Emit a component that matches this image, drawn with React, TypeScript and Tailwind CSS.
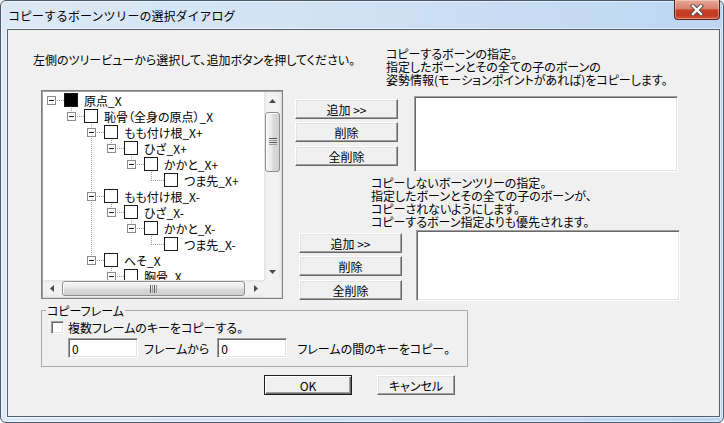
import React from "react";

interface TreeRow {
  text: string;
  level: number;
  kids: boolean;
  last: boolean;
  fill?: boolean;
}

const treeRows: TreeRow[] = [
  { text: "原点_X", level: 0, kids: true, last: true, fill: true },
  { text: "恥骨（全身の原点）_X", level: 1, kids: true, last: true },
  { text: "もも付け根_X+", level: 2, kids: true, last: false },
  { text: "ひざ_X+", level: 3, kids: true, last: true },
  { text: "かかと_X+", level: 4, kids: true, last: true },
  { text: "つま先_X+", level: 5, kids: false, last: true },
  { text: "もも付け根_X-", level: 2, kids: true, last: false },
  { text: "ひざ_X-", level: 3, kids: true, last: true },
  { text: "かかと_X-", level: 4, kids: true, last: true },
  { text: "つま先_X-", level: 5, kids: false, last: true },
  { text: "へそ_X", level: 2, kids: true, last: true },
  { text: "胸骨_X", level: 3, kids: true, last: false },
];

const raised =
  "flex items-center justify-center bg-[#f0f0f0] border border-t-white border-l-white border-b-[#696969] border-r-[#696969] shadow-[inset_-1px_-1px_0_#a0a0a0,inset_1px_1px_0_#e3e3e3]";
const sunken =
  "bg-white border border-t-[#a0a0a0] border-l-[#a0a0a0] border-b-white border-r-white shadow-[inset_1px_1px_0_#696969,inset_-1px_-1px_0_#e3e3e3]";

const dot = { stroke: "#a0a0a0", strokeDasharray: "1 1", shapeRendering: "crispEdges" as const };

function GuideCell({ on }: { on: boolean }) {
  return (
    <svg width="20" height="16" className="shrink-0">
      {on && <line x1="8.5" y1="0" x2="8.5" y2="16" {...dot} />}
    </svg>
  );
}

function ButtonCell({ row }: { row: TreeRow }) {
  return (
    <svg width="21" height="16" className="shrink-0">
      {row.level > 0 && <line x1="8.5" y1="0" x2="8.5" y2="8" {...dot} />}
      {!row.last && <line x1="8.5" y1="8" x2="8.5" y2="16" {...dot} />}
      <line x1="8" y1="8.5" x2="21" y2="8.5" {...dot} />
      {row.kids && (
        <>
          <rect x="4.5" y="4.5" width="8" height="8" fill="#fff" stroke="#8c8c8c" shapeRendering="crispEdges" />
          <line x1="6" y1="8.5" x2="11" y2="8.5" stroke="#222" shapeRendering="crispEdges" />
        </>
      )}
    </svg>
  );
}

function Grip({ vertical }: { vertical: boolean }) {
  return vertical ? (
    <svg width="8" height="8">
      {[0, 2, 4, 6].map((y) => (
        <line key={y} x1="0" y1={y + 0.5} x2="8" y2={y + 0.5} stroke={y % 4 === 0 ? "#5a5a5a" : "#9a9a9a"} shapeRendering="crispEdges" />
      ))}
    </svg>
  ) : (
    <svg width="8" height="8">
      {[0, 2, 4, 6].map((x) => (
        <line key={x} x1={x + 0.5} y1="0" x2={x + 0.5} y2="8" stroke={x % 4 === 0 ? "#5a5a5a" : "#9a9a9a"} shapeRendering="crispEdges" />
      ))}
    </svg>
  );
}

function Arrow({ dir }: { dir: "up" | "down" | "left" | "right" }) {
  const pts = {
    up: "0,4 3.5,0 7,4",
    down: "0,0 3.5,4 7,0",
    left: "4,0 0,3.5 4,7",
    right: "0,0 4,3.5 0,7",
  }[dir];
  const horiz = dir === "left" || dir === "right";
  return (
    <div className="w-[17px] h-[17px] flex items-center justify-center shrink-0">
      <svg width={horiz ? 4 : 7} height={horiz ? 7 : 4}>
        <polygon points={pts} fill="#4a4a4a" />
      </svg>
    </div>
  );
}

function TreeView() {
  const lastAt: boolean[] = [];
  const rows = treeRows.map((r) => {
    const guides = lastAt.slice(0, r.level).map((l) => !l);
    lastAt[r.level] = r.last;
    return { ...r, guides };
  });

  return (
    <div className="ml-[33px] mt-[24px] w-[242px] h-[209px] p-[1px] border border-[#7f7f7f] bg-white flex flex-col shadow-[inset_1px_1px_0_#a0a0a0,inset_-1px_-1px_0_#dcdcdc]">
      <div className="flex flex-1 min-h-0">
        <div className="flex-1 overflow-hidden flex flex-col">
          {rows.map((r, i) => (
            <div key={i} className="flex items-center h-[16px] shrink-0">
              {r.guides.map((g, k) => (
                <GuideCell key={k} on={g} />
              ))}
              <ButtonCell row={r} />
              <span className={`w-[14px] h-[14px] shrink-0 border border-[#1a1a1a] ${r.fill ? "bg-black" : "bg-white"}`} />
              <span className="ml-[6px] whitespace-nowrap">{r.text}</span>
            </div>
          ))}
        </div>
        <div className="w-[17px] flex flex-col bg-[linear-gradient(to_right,#e3e3e3,#f2f2f2_20%,#f2f2f2_80%,#e9e9e9)]">
          <Arrow dir="up" />
          <div className="mx-[1px] mt-[3px] h-[60px] rounded-[3px] border border-[#8e8e8e] bg-[linear-gradient(to_right,#f5f5f5,#e9e9e9_45%,#d9d9d9_55%,#d0d0d0)] shadow-[inset_1px_1px_0_#fff] flex items-center justify-center">
            <Grip vertical />
          </div>
          <div className="flex-1" />
          <Arrow dir="down" />
        </div>
      </div>
      <div className="flex h-[17px] shrink-0">
        <div className="flex-1 flex bg-[linear-gradient(to_bottom,#e3e3e3,#f2f2f2_20%,#f2f2f2_80%,#e9e9e9)]">
          <Arrow dir="left" />
          <div className="flex-1 mx-[2px] my-[1px] rounded-[3px] border border-[#8e8e8e] bg-[linear-gradient(to_bottom,#f5f5f5,#e9e9e9_45%,#d9d9d9_55%,#d0d0d0)] shadow-[inset_1px_1px_0_#fff] flex items-center justify-center">
            <Grip vertical={false} />
          </div>
          <Arrow dir="right" />
        </div>
        <div className="w-[17px] bg-[#f0f0f0]" />
      </div>
    </div>
  );
}

function ButtonStack({ first }: { first: string }) {
  return (
    <div className="flex flex-col">
      <button className={`${raised} w-[103px] h-[20px]`}>{first}</button>
      <button className={`${raised} w-[103px] h-[20px] mt-[3px]`}>削除</button>
      <button className={`${raised} w-[103px] h-[20px] mt-[4px]`}>全削除</button>
    </div>
  );
}

export default function App() {
  return (
    <div className="w-[724px] h-[423px] flex flex-col rounded-[6px] border border-[#4b5a6b] bg-[linear-gradient(to_right,#dde9f6,#cfe1f4_50%,#bcd6f1)] shadow-[inset_0_0_0_1px_rgba(255,255,255,0.55)] font-['Noto_Sans_CJK_JP',sans-serif] text-[12px] leading-[13px] text-black [font-feature-settings:'palt']">
      <div className="h-[28px] flex items-start justify-between shrink-0">
        <div className="pl-[7px] pt-[8px] [font-feature-settings:normal] whitespace-nowrap">
          コピーするボーンツリーの選択ダイアログ
        </div>
        <div className="-mt-[1px] mr-[3px] w-[46px] h-[20px] rounded-b-[4px] border border-t-0 border-[#5b1f16] bg-[linear-gradient(to_bottom,#e9a797,#d8826e_45%,#c6432c_52%,#c13a22_80%,#d85a3d)] shadow-[inset_0_0_0_1px_rgba(255,255,255,0.35)] flex items-center justify-center">
          <svg width="14" height="12" viewBox="0 0 14 12">
            <path d="M3 2 L11 10 M11 2 L3 10" stroke="#4a4a4a" strokeWidth="4.2" strokeLinecap="square" />
            <path d="M3 2 L11 10 M11 2 L3 10" stroke="#fff" strokeWidth="2.4" strokeLinecap="square" />
          </svg>
        </div>
      </div>

      <div className="ml-[6px] w-[713px] h-[388px] shrink-0 border border-[#56606c] bg-[#f0f0f0] flex flex-col shadow-[0_0_0_1px_rgba(255,255,255,0.5)]">
        <div className="flex h-[271px] shrink-0">
          <div className="w-[276px] shrink-0 flex flex-col">
            <p className="ml-[25px] mt-[23px] whitespace-nowrap">左側のツリービューから選択して、追加ボタンを押してください。</p>
            <TreeView />
          </div>

          <div className="flex flex-col">
            <div className="ml-[102px] mt-[17px] h-[39px] leading-[13px] whitespace-nowrap">
              <p>コピーするボーンの指定。</p>
              <p>指定したボーンとその全ての子のボーンの</p>
              <p>姿勢情報(モーションポイントがあれば)をコピーします。</p>
            </div>
            <div className="flex items-start mt-[10px]">
              <div className="ml-[11px] mt-[3px]">
                <ButtonStack first="追加 >>" />
              </div>
              <div className={`${sunken} ml-[16px] w-[264px] h-[76px]`} />
            </div>

            <div className="ml-[87px] mt-[4px] h-[52px] leading-[13px] whitespace-nowrap">
              <p>コピーしないボーンツリーの指定。</p>
              <p>指定したボーンとその全ての子のボーンが、</p>
              <p>コピーされないようにします。</p>
              <p>コピーするボーン指定よりも優先されます。</p>
            </div>
            <div className="flex items-start mt-[2px]">
              <div className="ml-[15px] mt-[3px]">
                <ButtonStack first="追加 >>" />
              </div>
              <div className={`${sunken} ml-[14px] w-[264px] h-[71px]`} />
            </div>
          </div>
        </div>

        <fieldset className="ml-[33px] mt-[3px] w-[427px] border border-[#a9a9a9] pb-[8px]">
          <legend className="ml-[4px] px-[1px] leading-[13px]">コピーフレーム</legend>
          <div className="flex items-center mt-[4px] h-[13px] pl-[9px]">
            <span className={`${sunken} w-[13px] h-[13px] shrink-0`} />
            <span className="ml-[4px] whitespace-nowrap">複数フレームのキーをコピーする。</span>
          </div>
          <div className="flex items-center mt-[4px] h-[20px] pl-[26px]">
            <div className={`${sunken} w-[70px] h-[20px] pl-[3px] flex items-center`}>0</div>
            <span className="ml-[6px] whitespace-nowrap">フレームから</span>
            <div className={`${sunken} ml-[8px] w-[70px] h-[20px] pl-[3px] flex items-center`}>0</div>
            <span className="ml-[10px] whitespace-nowrap">フレームの間のキーをコピー。</span>
          </div>
        </fieldset>

        <div className="flex mt-[8px] ml-[256px]">
          <button className="w-[88px] h-[20px] flex items-center justify-center bg-[#f0f0f0] border border-[#1e1e1e] shadow-[inset_1px_1px_0_#fff,inset_-1px_-1px_0_#696969,inset_-2px_-2px_0_#a0a0a0]">
            OK
          </button>
          <button className={`${raised} ml-[25px] w-[78px] h-[20px]`}>キャンセル</button>
        </div>
      </div>
    </div>
  );
}
